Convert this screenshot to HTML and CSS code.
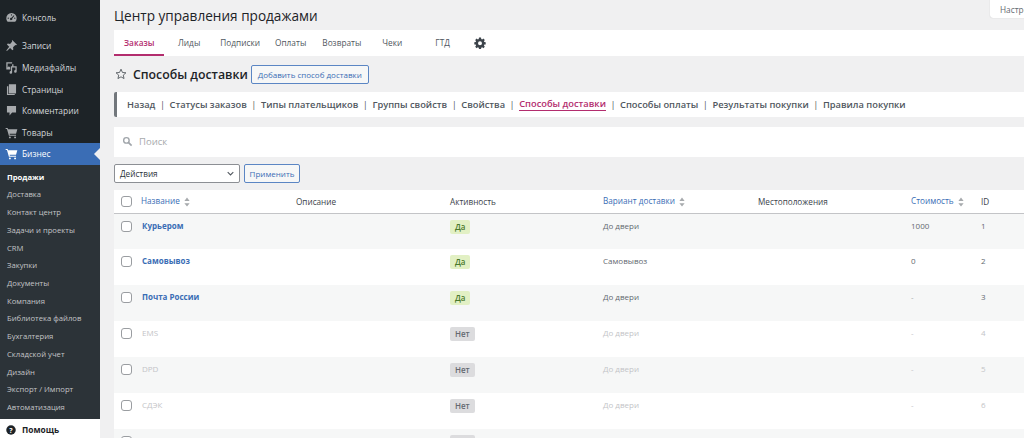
FILE: index.html
```html
<!DOCTYPE html>
<html lang="ru">
<head>
    <meta charset="utf-8">
    <title>Способы доставки</title>
    <link rel="stylesheet" href="styles.css">
</head>
<body>
<svg class="sprite" width="0" height="0">
    <symbol id="i-dash" viewBox="0 0 20 20"><path d="M10 3a8 8 0 0 0-8 8c0 2.200.9 4.200 2.300 5.600h11.400A8 8 0 0 0 18 11a8 8 0 0 0-8-8zm0 2a1 1 0 1 1 0 2 1 1 0 0 1 0-2zM5 10a1 1 0 1 1 0 2 1 1 0 0 1 0-2zm10 0a1 1 0 1 1 0 2 1 1 0 0 1 0-2zm-1.500-3.500 1 .8-3.300 4.200a1.800 1.800 0 1 1-1.200-1z"/></symbol>
    <symbol id="i-pin" viewBox="0 0 20 20"><path d="M11 1.500 18.500 9l-1.600.8-1-.7-3.500 3.400.4 3.500-1.400 1.300-3.600-3.600L3 18.500l-1-.7 4.500-5.800L3 8.500l1.300-1.400 3.500.4 3.400-3.500-.7-1z"/></symbol>
    <symbol id="i-media" viewBox="0 0 20 20"><path d="M2 2h9v3h2v4h-2V4H4v6l2-2 2 2H8v3H2zm7 6h9v8a2 2 0 1 1-2-2V10h-5v7.500a2 2 0 1 1-2-2z"/></symbol>
    <symbol id="i-page" viewBox="0 0 20 20"><path d="M6 2h11v14H6zM3 5h2v12h10v1.500H3z"/></symbol>
    <symbol id="i-comment" viewBox="0 0 20 20"><path d="M3 3h14v10h-6l-4 4.500V13H3z"/></symbol>
    <symbol id="i-cart" viewBox="0 0 20 20"><path d="M1 3h3l.7 2H19l-2 7H7l.5 1.500H17V15H6L3 4.500H1zM7.500 16a1.500 1.500 0 1 1 0 3 1.500 1.500 0 0 1 0-3zm8 0a1.500 1.500 0 1 1 0 3 1.500 1.500 0 0 1 0-3z"/></symbol>
    <symbol id="i-sort" viewBox="0 0 8 12"><path d="M4 0l3.500 4.500h-7zM4 12 .5 7.500h7z"/></symbol>
</svg>
<div class="page">
    <nav class="sidebar">
        <ul class="menu menu-first">
            <li><svg class="ico"><use href="#i-dash"/></svg>Консоль</li>
        </ul>
        <ul class="menu">
            <li><svg class="ico"><use href="#i-pin"/></svg>Записи</li>
            <li><svg class="ico"><use href="#i-media"/></svg>Медиафайлы</li>
            <li><svg class="ico"><use href="#i-page"/></svg>Страницы</li>
            <li><svg class="ico"><use href="#i-comment"/></svg>Комментарии</li>
            <li><svg class="ico"><use href="#i-cart"/></svg>Товары</li>
            <li class="active"><svg class="ico"><use href="#i-cart"/></svg>Бизнес</li>
        </ul>
        <ul class="submenu">
            <li class="current">Продажи</li>
            <li>Доставка</li>
            <li>Контакт центр</li>
            <li>Задачи и проекты</li>
            <li>CRM</li>
            <li>Закупки</li>
            <li>Документы</li>
            <li>Компания</li>
            <li>Библиотека файлов</li>
            <li>Бухгалтерия</li>
            <li>Складской учет</li>
            <li>Дизайн</li>
            <li>Экспорт / Импорт</li>
            <li>Автоматизация</li>
        </ul>
        <div class="help">
            <svg class="help-ico" viewBox="0 0 20 20"><circle cx="10" cy="10" r="9.500" fill="#1d2327"/><text x="10" y="15" text-anchor="middle" class="help-mark">?</text></svg>
            Помощь
        </div>
    </nav>
    <main class="main">
        <header class="top">
            <h1>Центр управления продажами</h1>
            <button class="screen-btn">Настройки</button>
        </header>
        <div class="tabs">
            <a class="tab tab-active">Заказы</a>
            <a class="tab t2">Лиды</a>
            <a class="tab t3">Подписки</a>
            <a class="tab t4">Оплаты</a>
            <a class="tab t5">Возвраты</a>
            <a class="tab t6">Чеки</a>
            <a class="tab t7">ГТД</a>
            <svg class="gear" viewBox="0 0 20 20"><path fill-rule="evenodd" d="M8.300 1h3.400l.4 2.400 1.500.6 2-1.400 2.400 2.400-1.400 2 .6 1.500 2.300.4v3.400l-2.300.4-.6 1.500 1.400 2-2.400 2.400-2-1.400-1.500.6-.4 2.300H8.300l-.4-2.300-1.500-.6-2 1.400L2 16.200l1.400-2-.6-1.500-2.300-.4V8.900l2.300-.4.6-1.500-1.400-2L4.400 2.600l2 1.400 1.500-.6zM10 7a3.300 3.300 0 1 0 0 6.600A3.300 3.300 0 0 0 10 7z"/></svg>
        </div>
        <div class="title-row">
            <svg class="star" viewBox="0 0 20 20"><path d="M10 2l2.400 5.400 5.800.6-4.400 3.900 1.300 5.700L10 14.700 4.900 17.600l1.300-5.700L1.800 8l5.800-.6z"/></svg>
            <h2>Способы доставки</h2>
            <button class="btn btn-add">Добавить способ доставки</button>
        </div>
        <div class="subnav">
            <a>Назад</a><span>|</span><a>Статусы заказов</a><span>|</span><a>Типы плательщиков</a><span>|</span><a>Группы свойств</a><span>|</span><a>Свойства</a><span>|</span><a class="on">Способы доставки</a><span>|</span><a>Способы оплаты</a><span>|</span><a>Результаты покупки</a><span>|</span><a>Правила покупки</a>
        </div>
        <div class="search">
            <svg class="search-ico" viewBox="0 0 20 20"><circle cx="8" cy="8" r="5" fill="none" stroke="#a0a5aa" stroke-width="2.500"/><path d="M11.500 11.500l6 6" stroke="#a0a5aa" stroke-width="3"/></svg>
            Поиск
        </div>
        <div class="actions">
            <div class="select">Действия
                <svg class="chev" viewBox="0 0 10 6"><path d="M1 1l4 4 4-4" fill="none" stroke="#50575e" stroke-width="1.500"/></svg>
            </div>
            <button class="btn btn-apply">Применить</button>
        </div>
        <table class="grid">
            <colgroup>
                <col class="c-check"><col class="c-name"><col class="c-desc"><col class="c-act"><col class="c-var"><col class="c-loc"><col class="c-cost"><col class="c-id">
            </colgroup>
            <thead>
                <tr>
                    <th><i class="check"></i></th>
                    <th class="sort">Название<svg class="sort-ico"><use href="#i-sort"/></svg></th>
                    <th>Описание</th>
                    <th>Активность</th>
                    <th class="sort">Вариант доставки<svg class="sort-ico"><use href="#i-sort"/></svg></th>
                    <th>Местоположения</th>
                    <th class="sort">Стоимость<svg class="sort-ico"><use href="#i-sort"/></svg></th>
                    <th>ID</th>
                </tr>
            </thead>
            <tbody>
                <tr class="alt">
                    <td><i class="check"></i></td><td class="name">Курьером</td><td></td><td><b class="tag yes">Да</b></td><td>До двери</td><td></td><td>1000</td><td>1</td>
                </tr>
                <tr>
                    <td><i class="check"></i></td><td class="name">Самовывоз</td><td></td><td><b class="tag yes">Да</b></td><td>Самовывоз</td><td></td><td>0</td><td>2</td>
                </tr>
                <tr class="alt">
                    <td><i class="check"></i></td><td class="name">Почта России</td><td></td><td><b class="tag yes">Да</b></td><td>До двери</td><td></td><td class="dim">-</td><td>3</td>
                </tr>
                <tr class="off">
                    <td><i class="check"></i></td><td class="name">EMS</td><td></td><td><b class="tag no">Нет</b></td><td>До двери</td><td></td><td>-</td><td>4</td>
                </tr>
                <tr class="alt off">
                    <td><i class="check"></i></td><td class="name">DPD</td><td></td><td><b class="tag no">Нет</b></td><td>До двери</td><td></td><td>-</td><td>5</td>
                </tr>
                <tr class="off">
                    <td><i class="check"></i></td><td class="name">СДЭК</td><td></td><td><b class="tag no">Нет</b></td><td>До двери</td><td></td><td>-</td><td>6</td>
                </tr>
                <tr class="alt off">
                    <td><i class="check"></i></td><td class="name">Новая</td><td></td><td><b class="tag no">Нет</b></td><td>До двери</td><td></td><td>-</td><td>7</td>
                </tr>
            </tbody>
        </table>
    </main>
</div>
</body>
</html>
```

FILE: styles.css
```css
* {
    margin: 0;
    padding: 0;
    box-sizing: border-box;
}
html, body {
    height: 438px;
    overflow: hidden;
}
body {
    background: #f0f0f1;
    font-family: "Open Sans", "Noto Sans", sans-serif;
    color: #3c434a;
}
ul {
    list-style: none;
}
.sprite {
    display: block;
    height: 0;
}
.page {
    display: flex;
    height: 438px;
}

/* sidebar */
.sidebar {
    width: 100px;
    flex: none;
    display: flex;
    flex-direction: column;
    background: #1d2327;
    font-size: 8.400px;
    font-weight: 500;
}
.menu {
    color: #d3d6d9;
}
.menu-first {
    padding-top: 7px;
    padding-bottom: 6.500px;
}
.menu li {
    position: relative;
    height: 21.600px;
    display: flex;
    align-items: center;
    gap: 4px;
    padding-left: 5px;
}
.ico {
    width: 13px;
    height: 13px;
    flex: none;
    fill: #a7aaad;
}
.menu .active {
    background: #3a6db5;
    color: #fff;
}
.menu .active .ico {
    fill: #fff;
}
.menu .active::after {
    content: "";
    position: absolute;
    right: 0;
    top: 5px;
    border: 6px solid transparent;
    border-right-color: #f0f0f1;
    border-left-width: 0;
}
.submenu {
    flex: 1;
    background: #2c3338;
    padding-top: 4px;
    color: #c3c4c7;
    font-weight: 400;
    font-size: 7.700px;
}
.submenu li {
    height: 17.730px;
    line-height: 17.730px;
    padding-left: 7px;
}
.submenu .current {
    color: #fff;
    font-weight: 700;
}
.help {
    height: 19px;
    flex: none;
    background: #fff;
    color: #1d2327;
    display: flex;
    align-items: center;
    gap: 6px;
    padding: 2px 0 0 6px;
    font-weight: 700;
}
.help-ico {
    width: 10px;
    height: 10px;
}
.help-mark {
    fill: #fff;
    font: 700 14px "Open Sans", sans-serif;
}

/* main */
.main {
    flex: 1;
    min-width: 0;
    overflow: hidden;
    padding-left: 14px;
}
.top {
    height: 30px;
    display: flex;
    justify-content: space-between;
}
.top h1 {
    font-size: 13.600px;
    font-weight: 400;
    color: #1d2327;
    line-height: 32px;
}
.screen-btn {
    width: 34px;
    height: 18px;
    padding-left: 10px;
    border: 0;
    border-radius: 0 0 0 3px;
    background: #fff;
    box-shadow: 0 0 1px rgba(0,0,0,.25);
    color: #646970;
    font: 8.300px "Open Sans", sans-serif;
    text-align: left;
    white-space: nowrap;
    overflow: hidden;
}
.tabs {
    height: 26px;
    background: #fff;
    display: flex;
    align-items: center;
    font-size: 8.300px;
    color: #50575e;
}
.tab {
    display: block;
    line-height: 26px;
    flex: none;
}
.tab-active {
    width: 50px;
    height: 26px;
    padding-left: 10px;
    color: #b32d6e;
    font-weight: 600;
    border-bottom: 2px solid #b32d6e;
}
.t2 { margin-left: 14px; }
.t3 { margin-left: 20px; }
.t4 { margin-left: 15px; }
.t5 { margin-left: 16px; }
.t6 { margin-left: 21px; }
.t7 { margin-left: 33px; }
.gear {
    width: 12px;
    height: 12px;
    margin-left: 24px;
    fill: #3c434a;
}
.title-row {
    height: 36px;
    display: flex;
    align-items: center;
}
.star {
    width: 12px;
    height: 12px;
    fill: none;
    stroke: #3c434a;
    stroke-width: 1.300;
    margin-left: 1px;
}
.title-row h2 {
    font-size: 12.300px;
    font-weight: 600;
    color: #1d2327;
    margin-left: 6px;
    white-space: nowrap;
}
.btn {
    height: 19px;
    background: #f6f7f7;
    border: 1px solid #5b86c4;
    border-radius: 2px;
    color: #3a6db5;
    font-family: "Open Sans", sans-serif;
    font-size: 8px;
    font-weight: 400;
}
.btn-add {
    width: 118px;
    margin-left: 3px;
}
.subnav {
    height: 24.500px;
    background: #fff;
    border-left: 3px solid #72777c;
    border-radius: 2px 0 0 2px;
    display: flex;
    align-items: center;
    padding-left: 10px;
    font-size: 9.300px;
    font-weight: 600;
    color: #50575e;
    white-space: nowrap;
}
.subnav span {
    margin: 0 4.500px;
    font-weight: 400;
}
.subnav .on {
    color: #b32d6e;
    border-bottom: 1px solid #b32d6e;
    line-height: 12px;
}
.search {
    height: 30px;
    margin-top: 10px;
    background: #fff;
    display: flex;
    align-items: center;
    gap: 6px;
    padding-left: 8px;
    font-size: 9.500px;
    color: #a7aaad;
}
.search-ico {
    width: 11px;
    height: 11px;
}
.actions {
    display: flex;
    gap: 4px;
    height: 19px;
    margin-top: 7.500px;
}
.select {
    width: 126px;
    height: 19px;
    background: #fff;
    border: 1px solid #8c8f94;
    border-radius: 2px;
    display: flex;
    align-items: center;
    justify-content: space-between;
    padding: 0 5px;
    font-size: 8.200px;
    color: #2c3338;
}
.chev {
    width: 7px;
    height: 5px;
}
.btn-apply {
    width: 56px;
}

/* table */
.grid {
    width: 1000px;
    margin-top: 7px;
    table-layout: fixed;
    border-collapse: collapse;
    background: #fff;
    font-size: 8px;
}
.c-check { width: 27px; }
.c-name { width: 155px; }
.c-desc { width: 154px; }
.c-act { width: 153px; }
.c-var { width: 155px; }
.c-loc { width: 153px; }
.c-cost { width: 70px; }
.c-id { width: 133px; }
.grid th {
    height: 23px;
    font-weight: 400;
    font-size: 8.200px;
    text-align: left;
    color: #3c434a;
    border-bottom: 1px solid #c3c4c7;
}
.grid th.sort {
    color: #3a6db5;
}
.sort-ico {
    width: 6px;
    height: 10px;
    margin-left: 4px;
    vertical-align: middle;
    fill: #a7aaad;
}
.grid td {
    height: 36px;
    vertical-align: top;
    padding-top: 6px;
    color: #646970;
}
.grid td:first-child, .grid th:first-child {
    padding-left: 7px;
}
.grid td:first-child {
    padding-top: 7px;
}
.grid tr.alt {
    background: #f6f7f7;
}
.grid td.name {
    padding-left: 1px;
    font-size: 8px;
    font-weight: 700;
    color: #3a6db5;
}
.grid .dim {
    color: #a7aaad;
}
.check {
    display: block;
    width: 11px;
    height: 11px;
    background: #fff;
    border: 1px solid #9a9da1;
    border-radius: 3px;
}
.tag {
    display: inline-block;
    height: 14px;
    line-height: 14px;
    padding: 0 5px;
    border-radius: 2px;
    font-size: 8px;
    font-weight: 600;
}
.yes {
    background: #e2f0c4;
    color: #4a7a2c;
}
.no {
    background: #dcdcde;
    color: #646970;
}
.grid .off td {
    color: #c3c4c7;
}
.grid .off td.name {
    color: #c3c4c7;
    font-weight: 400;
}
```
